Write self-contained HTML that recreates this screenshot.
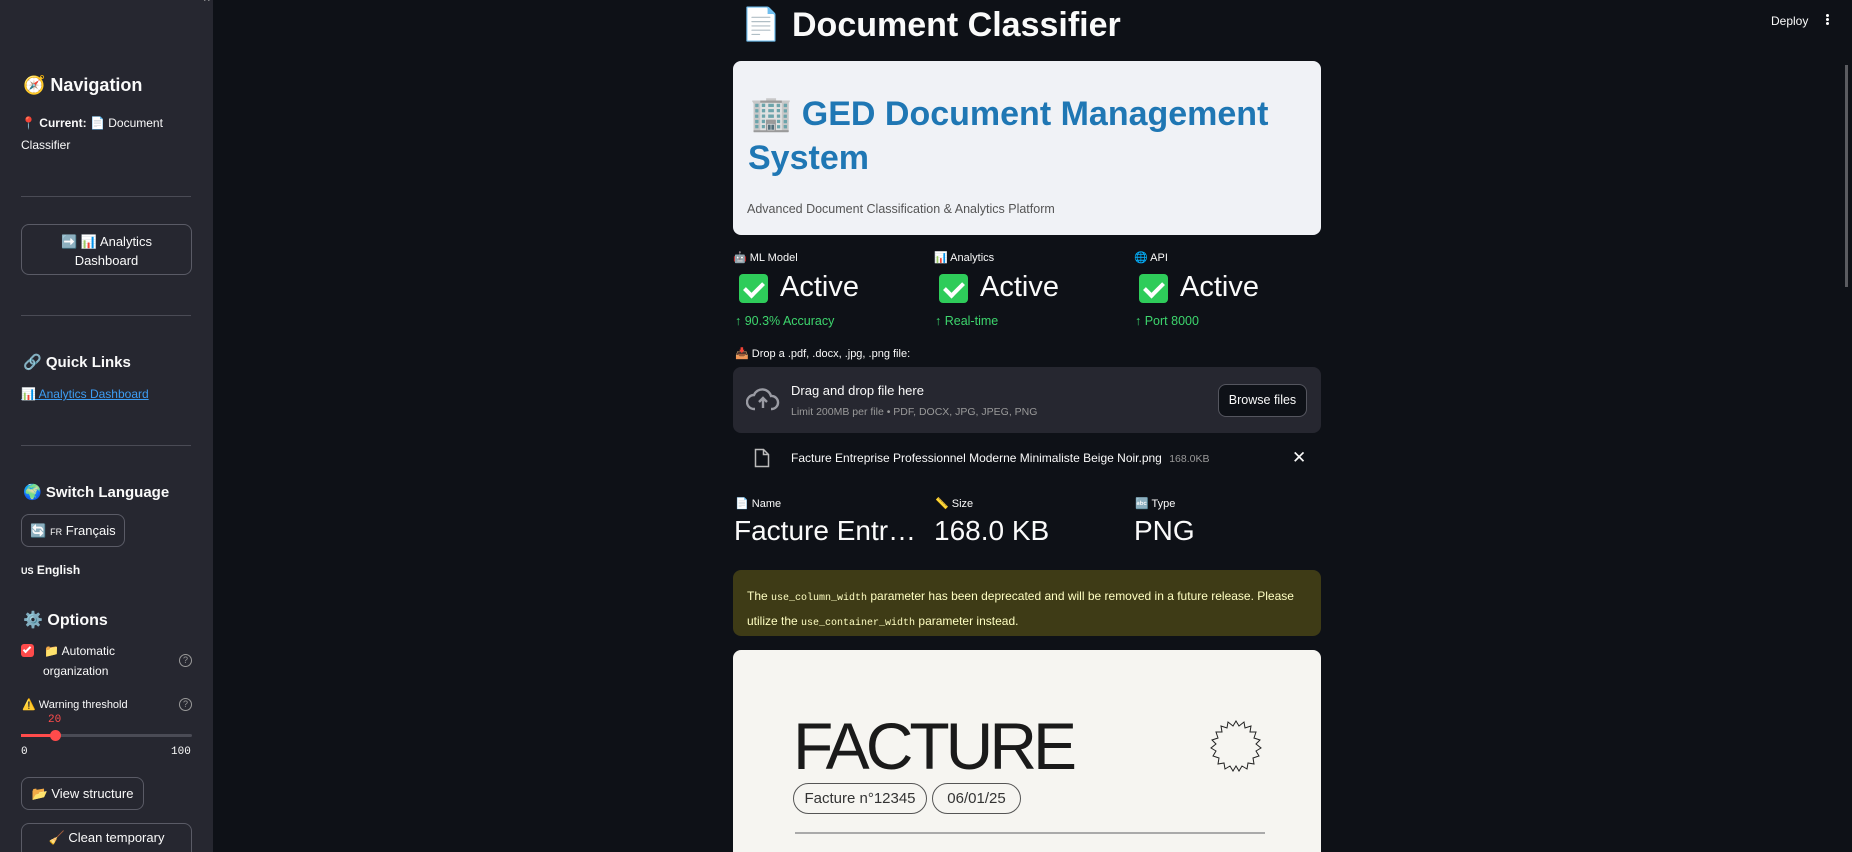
<!DOCTYPE html>
<html style="overflow:hidden;width:1852px;height:852px"><head><meta charset="utf-8"><style>
*{margin:0;padding:0;box-sizing:border-box}
body{width:1852px;height:852px;overflow:hidden;background:#0e1117;font-family:"Liberation Sans","Noto Sans CJK SC",sans-serif;color:#fafafa;position:relative}
.a{position:absolute;white-space:nowrap}
#sb{position:absolute;left:0;top:0;width:213px;height:852px;background:#262730}
.hr{position:absolute;left:21px;width:170px;height:1px;background:#4a4b55}
.btn{position:absolute;border:1px solid #5a5b66;border-radius:8px;color:#fafafa;font-size:13px;text-align:center}
.h3{font-size:16px;font-weight:bold}
.sm{font-size:12px}
.lab{font-size:11px}
.big{font-size:29px}
.delta{font-size:12.5px;color:#3dd56d}
.chk{display:inline-block;width:29px;height:29px;background:#2ecc5a;border-radius:4px;vertical-align:middle;position:relative;margin-right:12px}
.chk:after{content:"";position:absolute;left:9px;top:4px;width:8px;height:15px;border:solid #fff;border-width:0 4px 4px 0;transform:rotate(45deg)}
</style></head><body>
<div id="sb">
<div class="a" style="left:204px;top:-6px;color:#aaa;font-size:12px">^</div>
<div class="a h3" style="left:23px;top:75px;font-size:18px">🧭 Navigation</div>
<div class="a sm" style="left:21px;top:116px">📍 <b>Current:</b> 📄 Document</div>
<div class="a sm" style="left:21px;top:138px">Classifier</div>
<div class="hr" style="top:196px"></div>
<div class="btn" style="left:21px;top:224px;width:171px;height:51px;padding-top:7px;line-height:19px">➡️ 📊 Analytics<br>Dashboard</div>
<div class="hr" style="top:315px"></div>
<div class="a h3" style="left:23px;top:353px;font-size:15px">🔗 Quick Links</div>
<div class="a sm" style="left:21px;top:387px;color:#3d9df3;text-decoration:underline">📊 Analytics Dashboard</div>
<div class="hr" style="top:445px"></div>
<div class="a h3" style="left:23px;top:483px;font-size:15px">🌍 Switch Language</div>
<div class="btn" style="left:21px;top:514px;width:104px;height:33px;line-height:31px">🔄 <small style="font-size:9px">FR</small> Français</div>
<div class="a sm" style="left:21px;top:563px;font-weight:bold"><small style="font-size:9px">US</small> English</div>
<div class="a h3" style="left:23px;top:610px;font-size:16px">⚙️ Options</div>
<div class="a" style="left:21px;top:644px;width:13px;height:13px;background:#ff4b4b;border-radius:3px"><div style="position:absolute;left:4px;top:1px;width:4px;height:8px;border:solid #fff;border-width:0 2px 2px 0;transform:rotate(45deg)"></div></div>
<div class="a sm" style="left:44px;top:644px">📁 Automatic</div>
<div class="a sm" style="left:43px;top:664px">organization</div>
<div class="a" style="left:179px;top:654px;width:13px;height:13px;border:1px solid #999;border-radius:50%;font-size:9px;text-align:center;line-height:11px;color:#999">?</div>
<div class="a" style="left:22px;top:698px;font-size:11px">⚠️ Warning threshold</div>
<div class="a" style="left:179px;top:698px;width:13px;height:13px;border:1px solid #999;border-radius:50%;font-size:9px;text-align:center;line-height:11px;color:#999">?</div>
<div class="a" style="left:48px;top:714px;font-size:11px;color:#ff4b4b;font-family:'Liberation Mono',monospace">20</div>
<div class="a" style="left:21px;top:734px;width:171px;height:3px;background:#4a4b55;border-radius:2px"></div>
<div class="a" style="left:21px;top:734px;width:34px;height:3px;background:#ff4b4b"></div>
<div class="a" style="left:50px;top:730px;width:11px;height:11px;background:#ff4b4b;border-radius:50%"></div>
<div class="a" style="left:21px;top:746px;font-size:11px;font-family:'Liberation Mono',monospace">0</div>
<div class="a" style="left:171px;top:746px;font-size:11px;font-family:'Liberation Mono',monospace">100</div>
<div class="btn" style="left:21px;top:777px;width:123px;height:33px;line-height:31px">📂 View structure</div>
<div class="btn" style="left:21px;top:823px;width:171px;height:40px;padding-top:6px">🧹 Clean temporary</div>
</div>
<div class="a" style="left:1771px;top:14px;font-size:12px">Deploy</div>
<div class="a" style="left:1826px;top:14px;width:3px;height:3px;background:#fff;border-radius:50%;box-shadow:0 4px 0 #fff,0 8px 0 #fff"></div>
<div class="a" style="left:1845px;top:65px;width:3px;height:222px;background:#5a5b60"></div>

<div class="a" style="left:741px;top:5px;font-size:32px">📄</div>
<div class="a" style="left:792px;top:6px;font-size:34px;font-weight:bold">Document Classifier</div>

<div class="a" style="left:733px;top:61px;width:588px;height:174px;background:#f0f2f6;border-radius:8px"></div>
<div class="a" style="left:750px;top:94px;font-size:34px;font-weight:bold;color:#1f77b4">🏢 GED Document Management</div>
<div class="a" style="left:748px;top:139px;font-size:34px;font-weight:bold;color:#1f77b4">System</div>
<div class="a" style="left:747px;top:202px;font-size:12.5px;color:#555">Advanced Document Classification &amp; Analytics Platform</div>

<div class="a lab" style="left:733px;top:251px">🤖 ML Model</div>
<div class="a lab" style="left:934px;top:251px">📊 Analytics</div>
<div class="a lab" style="left:1134px;top:251px">🌐 API</div>
<div class="a big" style="left:739px;top:271px"><span class="chk"></span>Active</div>
<div class="a big" style="left:939px;top:271px"><span class="chk"></span>Active</div>
<div class="a big" style="left:1139px;top:271px"><span class="chk"></span>Active</div>
<div class="a delta" style="left:735px;top:314px">↑ 90.3% Accuracy</div>
<div class="a delta" style="left:935px;top:314px">↑ Real-time</div>
<div class="a delta" style="left:1135px;top:314px">↑ Port 8000</div>

<div class="a lab" style="left:735px;top:347px">📥 Drop a .pdf, .docx, .jpg, .png file:</div>
<div class="a" style="left:733px;top:367px;width:588px;height:66px;background:#262730;border-radius:8px"></div>
<svg class="a" style="left:746px;top:386px" width="34" height="26" viewBox="0 0 34 26"><path d="M9 23H8A7 7 0 0 1 8 9a9 9 0 0 1 17 1 6.5 6.5 0 0 1 1 13h-1" fill="none" stroke="#9a9ba3" stroke-width="2.4"/><path d="M17 22V12M13 16l4-4 4 4" fill="none" stroke="#9a9ba3" stroke-width="2.4"/></svg>
<div class="a" style="left:791px;top:383px;font-size:13px">Drag and drop file here</div>
<div class="a" style="left:791px;top:406px;font-size:10.5px;color:#999">Limit 200MB per file • PDF, DOCX, JPG, JPEG, PNG</div>
<div class="a" style="left:1218px;top:384px;width:89px;height:33px;border:1px solid #55565f;border-radius:8px;background:#0e1117;font-size:12.5px;text-align:center;line-height:31px">Browse files</div>

<svg class="a" style="left:754px;top:448px" width="16" height="20" viewBox="0 0 16 20"><path d="M1.5 1.5h8l5 5v12h-13z M9.5 1.5v5h5" fill="none" stroke="#bbb" stroke-width="1.5"/></svg>
<div class="a" style="left:791px;top:451px;font-size:12px">Facture Entreprise Professionnel Moderne Minimaliste Beige Noir.png <span style="color:#999;font-size:10.5px;margin-left:4px">168.0KB</span></div>
<div class="a" style="left:1292px;top:448px;font-size:17px">✕</div>

<div class="a lab" style="left:735px;top:497px">📄 Name</div>
<div class="a lab" style="left:935px;top:497px">📏 Size</div>
<div class="a lab" style="left:1135px;top:497px">🔤 Type</div>
<div class="a" style="left:734px;top:515px;font-size:28px">Facture Entr…</div>
<div class="a" style="left:934px;top:515px;font-size:28px">168.0 KB</div>
<div class="a" style="left:1134px;top:515px;font-size:28px">PNG</div>

<div class="a" style="left:733px;top:570px;width:588px;height:66px;background:#3e3b16;border-radius:8px"></div>
<div class="a" style="left:747px;top:585px;font-size:12px;color:#ffffc2;line-height:23px">The <code style="font-family:'Liberation Mono',monospace;font-size:10px">use_column_width</code> parameter has been deprecated and will be removed in a future release. Please<br>utilize the <code style="font-family:'Liberation Mono',monospace;font-size:10px">use_container_width</code> parameter instead.</div>

<div class="a" style="left:733px;top:650px;width:588px;height:202px;background:#f6f5f1;border-radius:8px 8px 0 0"></div>
<div class="a" style="left:793px;top:710px;font-size:66px;color:#1a1a1a;letter-spacing:-4px;line-height:72px">FACTURE</div>
<svg class="a" style="left:1209px;top:719px" width="54" height="54" viewBox="0 0 54 54"><polygon fill="none" stroke="#222" stroke-width="1" points="27,2 30,7 35,3 36,9 42,7 41,13 47,13 45,19 51,21 47,25 52,29 47,32 50,37 44,39 45,45 39,44 38,50 33,47 30,52 27,47 24,52 21,47 16,50 15,44 9,45 10,39 4,37 7,32 2,29 7,25 3,21 9,19 7,13 13,13 12,7 18,9 19,3 24,7"/></svg>
<div class="a" style="left:793px;top:783px;width:134px;height:31px;border:1px solid #555;border-radius:16px;color:#333;font-size:15px;text-align:center;line-height:29px">Facture n°12345</div>
<div class="a" style="left:932px;top:783px;width:89px;height:31px;border:1px solid #555;border-radius:16px;color:#333;font-size:15px;text-align:center;line-height:29px">06/01/25</div>
<div class="a" style="left:795px;top:832px;width:470px;height:2px;background:#aaa"></div>
</body></html>
